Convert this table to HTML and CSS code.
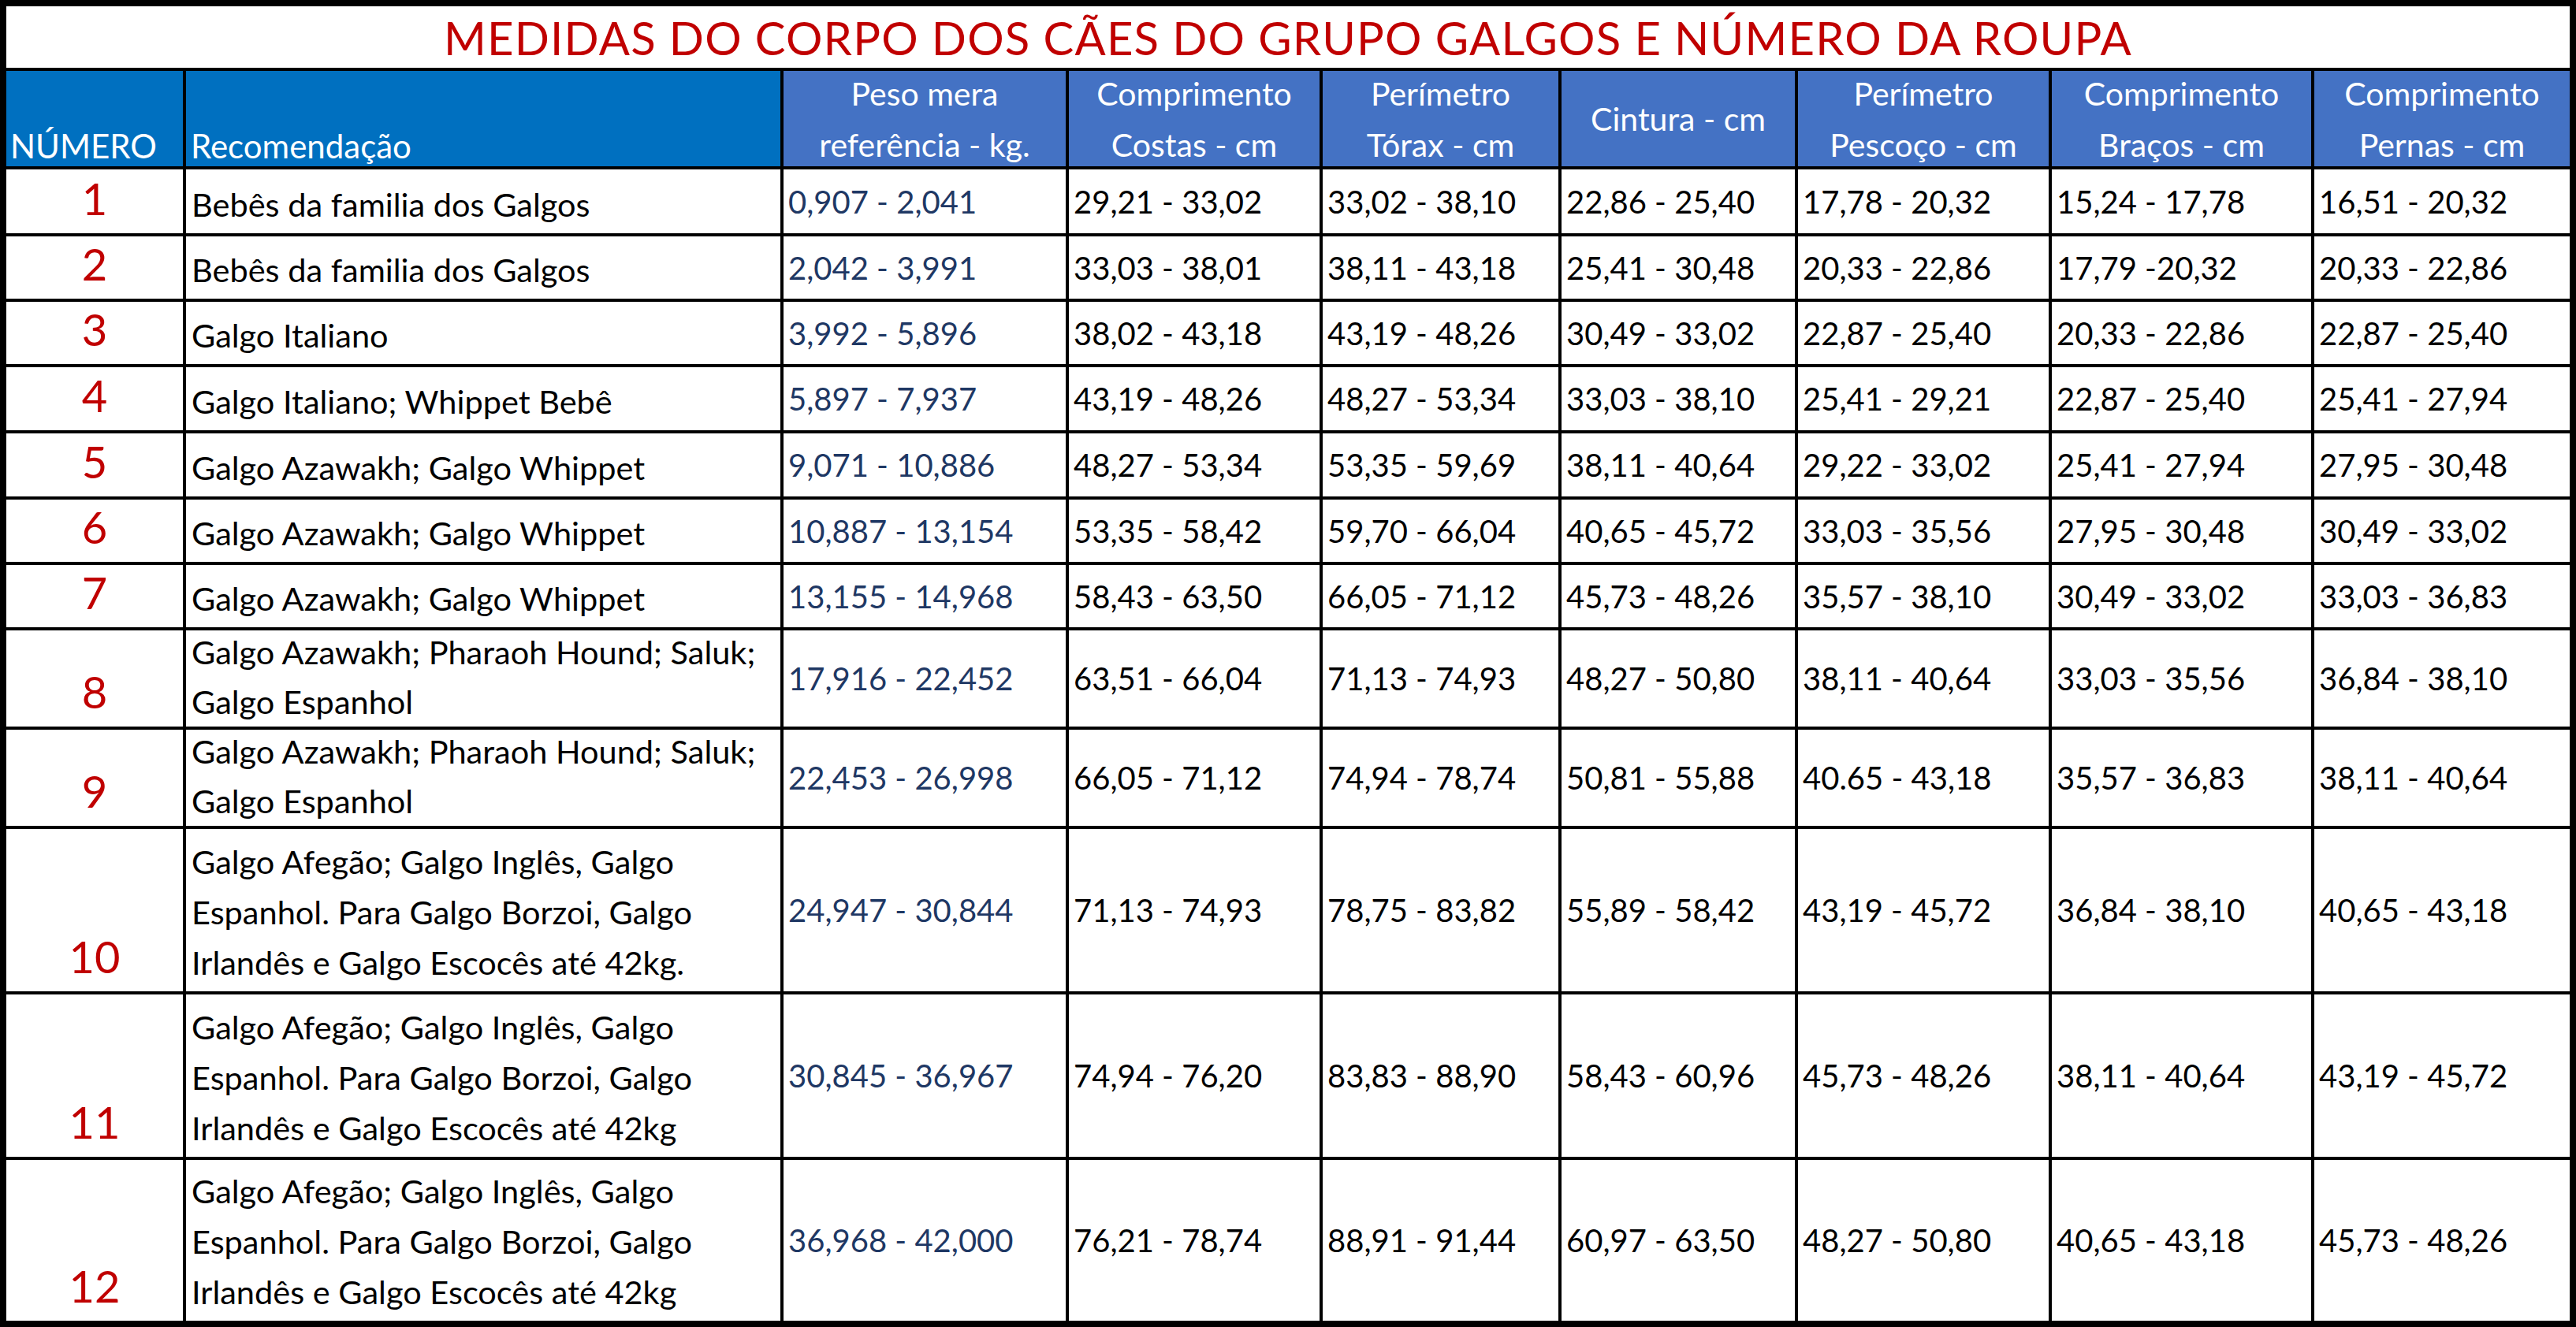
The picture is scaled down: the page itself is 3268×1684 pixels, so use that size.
FILE: index.html
```html
<!DOCTYPE html>
<html lang="pt">
<head>
<meta charset="utf-8">
<title>Medidas do corpo dos cães do grupo Galgos</title>
<link rel="stylesheet" href="styles.css">
</head>
<body>
<div class="sheet">
  <div class="title">MEDIDAS DO CORPO DOS CÃES DO GRUPO GALGOS E NÚMERO DA ROUPA</div>

  <div class="hd hd-dark hd-left">NÚMERO</div>
  <div class="hd hd-dark hd-left hd-rec">Recomendação</div>
  <div class="hd">Peso mera<br>referência - kg.</div>
  <div class="hd">Comprimento<br>Costas - cm</div>
  <div class="hd">Perímetro<br>Tórax - cm</div>
  <div class="hd">Cintura - cm</div>
  <div class="hd">Perímetro<br>Pescoço - cm</div>
  <div class="hd">Comprimento<br>Braços - cm</div>
  <div class="hd">Comprimento<br>Pernas - cm</div>

  <div class="num">1</div><div class="rec">Bebês da familia dos Galgos</div>
  <div class="val peso">0,907 - 2,041</div><div class="val">29,21 - 33,02</div><div class="val">33,02 - 38,10</div><div class="val">22,86 - 25,40</div><div class="val">17,78 - 20,32</div><div class="val">15,24 - 17,78</div><div class="val">16,51 - 20,32</div>

  <div class="num">2</div><div class="rec">Bebês da familia dos Galgos</div>
  <div class="val peso">2,042 - 3,991</div><div class="val">33,03 - 38,01</div><div class="val">38,11 - 43,18</div><div class="val">25,41 - 30,48</div><div class="val">20,33 - 22,86</div><div class="val">17,79 -20,32</div><div class="val">20,33 - 22,86</div>

  <div class="num">3</div><div class="rec">Galgo Italiano</div>
  <div class="val peso">3,992 - 5,896</div><div class="val">38,02 - 43,18</div><div class="val">43,19 - 48,26</div><div class="val">30,49 - 33,02</div><div class="val">22,87 - 25,40</div><div class="val">20,33 - 22,86</div><div class="val">22,87 - 25,40</div>

  <div class="num">4</div><div class="rec">Galgo Italiano; Whippet Bebê</div>
  <div class="val peso">5,897 - 7,937</div><div class="val">43,19 - 48,26</div><div class="val">48,27 - 53,34</div><div class="val">33,03 - 38,10</div><div class="val">25,41 - 29,21</div><div class="val">22,87 - 25,40</div><div class="val">25,41 - 27,94</div>

  <div class="num">5</div><div class="rec">Galgo Azawakh; Galgo Whippet</div>
  <div class="val peso">9,071 - 10,886</div><div class="val">48,27 - 53,34</div><div class="val">53,35 - 59,69</div><div class="val">38,11 - 40,64</div><div class="val">29,22 - 33,02</div><div class="val">25,41 - 27,94</div><div class="val">27,95 - 30,48</div>

  <div class="num">6</div><div class="rec">Galgo Azawakh; Galgo Whippet</div>
  <div class="val peso">10,887 - 13,154</div><div class="val">53,35 - 58,42</div><div class="val">59,70 - 66,04</div><div class="val">40,65 - 45,72</div><div class="val">33,03 - 35,56</div><div class="val">27,95 - 30,48</div><div class="val">30,49 - 33,02</div>

  <div class="num">7</div><div class="rec">Galgo Azawakh; Galgo Whippet</div>
  <div class="val peso">13,155 - 14,968</div><div class="val">58,43 - 63,50</div><div class="val">66,05 - 71,12</div><div class="val">45,73 - 48,26</div><div class="val">35,57 - 38,10</div><div class="val">30,49 - 33,02</div><div class="val">33,03 - 36,83</div>

  <div class="num">8</div><div class="rec rec-two">Galgo Azawakh; Pharaoh Hound; Saluk;<br>Galgo Espanhol</div>
  <div class="val peso">17,916 - 22,452</div><div class="val">63,51 - 66,04</div><div class="val">71,13 - 74,93</div><div class="val">48,27 - 50,80</div><div class="val">38,11 - 40,64</div><div class="val">33,03 - 35,56</div><div class="val">36,84 - 38,10</div>

  <div class="num">9</div><div class="rec rec-two">Galgo Azawakh; Pharaoh Hound; Saluk;<br>Galgo Espanhol</div>
  <div class="val peso">22,453 - 26,998</div><div class="val">66,05 - 71,12</div><div class="val">74,94 - 78,74</div><div class="val">50,81 - 55,88</div><div class="val">40.65 - 43,18</div><div class="val">35,57 - 36,83</div><div class="val">38,11 - 40,64</div>

  <div class="num">10</div><div class="rec">Galgo Afegão; Galgo Inglês, Galgo<br>Espanhol. Para Galgo Borzoi, Galgo<br>Irlandês e Galgo Escocês até 42kg.</div>
  <div class="val peso">24,947 - 30,844</div><div class="val">71,13 - 74,93</div><div class="val">78,75 - 83,82</div><div class="val">55,89 - 58,42</div><div class="val">43,19 - 45,72</div><div class="val">36,84 - 38,10</div><div class="val">40,65 - 43,18</div>

  <div class="num">11</div><div class="rec">Galgo Afegão; Galgo Inglês, Galgo<br>Espanhol. Para Galgo Borzoi, Galgo<br>Irlandês e Galgo Escocês até 42kg</div>
  <div class="val peso">30,845 - 36,967</div><div class="val">74,94 - 76,20</div><div class="val">83,83 - 88,90</div><div class="val">58,43 - 60,96</div><div class="val">45,73 - 48,26</div><div class="val">38,11 - 40,64</div><div class="val">43,19 - 45,72</div>

  <div class="num">12</div><div class="rec">Galgo Afegão; Galgo Inglês, Galgo<br>Espanhol. Para Galgo Borzoi, Galgo<br>Irlandês e Galgo Escocês até 42kg</div>
  <div class="val peso">36,968 - 42,000</div><div class="val">76,21 - 78,74</div><div class="val">88,91 - 91,44</div><div class="val">60,97 - 63,50</div><div class="val">48,27 - 50,80</div><div class="val">40,65 - 43,18</div><div class="val">45,73 - 48,26</div>
</div>
</body>
</html>
```

FILE: styles.css
```css
html, body {
  margin: 0;
  padding: 0;
  background: #ffffff;
}

body {
  font-family: "Lato", "Liberation Sans", sans-serif;
  width: 3268px;
  height: 1684px;
  overflow: hidden;
}

.sheet {
  box-sizing: border-box;
  width: 3268px;
  height: 1684px;
  border: 8px solid #000;
  background: #000;
  display: grid;
  grid-template-columns: 224px 754px 358px 318px 299px 296px 318px 329px 324px;
  grid-template-rows: 78px 121px 81px 79px 79px 80px 80px 79px 79px 122px 122px 206px 206px 204px;
  gap: 4px;
}

.title {
  grid-column: 1 / -1;
  background: #fff;
  color: #c00000;
  font-size: 58px;
  letter-spacing: 1.2px;
  line-height: 1;
  display: flex;
  align-items: center;
  justify-content: center;
  padding-top: 2px;
  white-space: nowrap;
}

.hd {
  background: #4472c4;
  color: #fff;
  font-size: 41px;
  line-height: 65px;
  display: flex;
  align-items: center;
  justify-content: center;
  text-align: center;
  white-space: nowrap;
}

.hd-dark {
  background: #0070c0;
}

.hd-left {
  font-size: 42px;
  align-items: flex-end;
  justify-content: flex-start;
  text-align: left;
  padding-left: 5px;
  padding-bottom: 0;
  line-height: 52px;
}

.hd-rec {
  padding-left: 6px;
}

.num {
  background: #fff;
  color: #c00000;
  font-size: 56px;
  line-height: 56px;
  display: flex;
  align-items: flex-end;
  justify-content: center;
  padding-bottom: 16px;
}

.rec {
  background: #fff;
  color: #000;
  font-size: 41.5px;
  line-height: 64px;
  display: flex;
  align-items: flex-end;
  padding-left: 7px;
  padding-bottom: 5px;
  white-space: nowrap;
}

.rec-two {
  padding-bottom: 0;
  line-height: 63px;
}

.val {
  background: #fff;
  color: #000;
  font-size: 40px;
  line-height: 1;
  display: flex;
  align-items: center;
  padding-left: 6px;
  white-space: nowrap;
}

.peso {
  color: #1f3864;
}
```
